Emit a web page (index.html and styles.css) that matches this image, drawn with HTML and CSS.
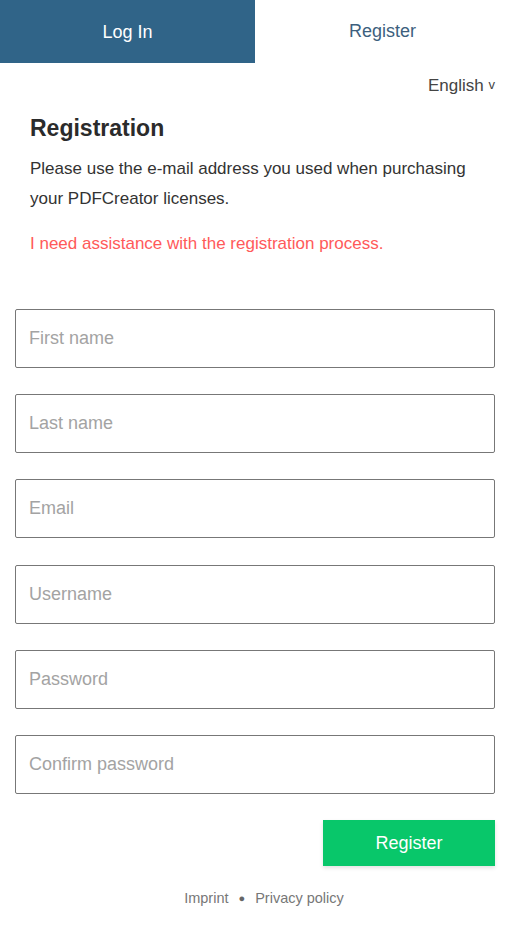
FILE: index.html
```html
<!DOCTYPE html>
<html lang="en">
<head>
  <meta charset="UTF-8">
  <meta name="viewport" content="width=device-width, initial-scale=1">
  <title>Register - PDFCreator</title>
  <link rel="stylesheet" href="styles.css">
</head>
<body>

  <nav class="tabs">
    <a class="tab active" href="#">Log In</a>
    <a class="tab" href="#">Register</a>
  </nav>

  <div class="lang">
    <span class="lang-toggle">English <span class="caret">v</span></span>
  </div>

  <div class="intro">
    <h1>Registration</h1>
    <p>Please use the e-mail address you used when purchasing your PDFCreator licenses.</p>
    <a class="help" href="#">I need assistance with the registration process.</a>
  </div>

  <form class="reg-form" onsubmit="return false">
    <input type="text" placeholder="First name">
    <input type="text" placeholder="Last name">
    <input type="email" placeholder="Email">
    <input type="text" placeholder="Username">
    <input type="password" placeholder="Password">
    <input type="password" placeholder="Confirm password">
    <div class="actions">
      <button type="submit">Register</button>
    </div>
  </form>

  <footer class="footer">
    <a href="#">Imprint</a>
    <span class="dot">●</span>
    <a href="#">Privacy policy</a>
  </footer>

</body>
</html>
```

FILE: styles.css
```css
body {
  margin: 0;
  font-family: "Liberation Sans", Arial, sans-serif;
  color: #333;
  background: #fff;
}
a {
  text-decoration: none;
}
.tabs {
  display: flex;
  height: 63px;
}
.tab {
  flex: 1;
  display: flex;
  align-items: center;
  justify-content: center;
  font-size: 18px;
  color: #3d5f7e;
}
.tab.active {
  background: #306488;
  color: #fff;
  padding-top: 2px;
}
.lang {
  display: flex;
  justify-content: flex-end;
  padding: 13px 15px 0;
  font-size: 17px;
  color: #444;
}
.caret {
  font-size: 13px;
  position: relative;
  top: -2px;
}
.intro {
  padding: 19px 30px 0;
}
.intro h1 {
  font-size: 23px;
  margin: 0 0 12px;
  color: #2b2b2b;
}
.intro p {
  font-size: 17px;
  line-height: 29.5px;
  margin: 0 0 21px;
  color: #333;
}
.help {
  font-size: 17px;
  color: #ff5a5a;
}
.reg-form {
  display: flex;
  flex-direction: column;
  gap: 26.2px;
  padding: 0 15px;
  margin-top: 55px;
}
.reg-form input {
  height: 59px;
  box-sizing: border-box;
  border: 1px solid #777;
  border-radius: 2px;
  padding: 0 13px;
  font-family: inherit;
  font-size: 18px;
  color: #333;
}
.reg-form input::placeholder {
  color: #a3a3a3;
}
.actions {
  display: flex;
  justify-content: flex-end;
}
.actions button {
  width: 172px;
  height: 46px;
  border: none;
  background: #08c76a;
  color: #fff;
  font-family: inherit;
  font-size: 18px;
  box-shadow: 0 2px 4px rgba(0, 0, 0, 0.12);
  cursor: pointer;
}
.footer {
  display: flex;
  justify-content: center;
  align-items: center;
  gap: 10px;
  padding: 24px 0 20px 18px;
  font-size: 14.5px;
}
.footer a {
  color: #777;
}
.dot {
  font-size: 11px;
  color: #666;
}
```
